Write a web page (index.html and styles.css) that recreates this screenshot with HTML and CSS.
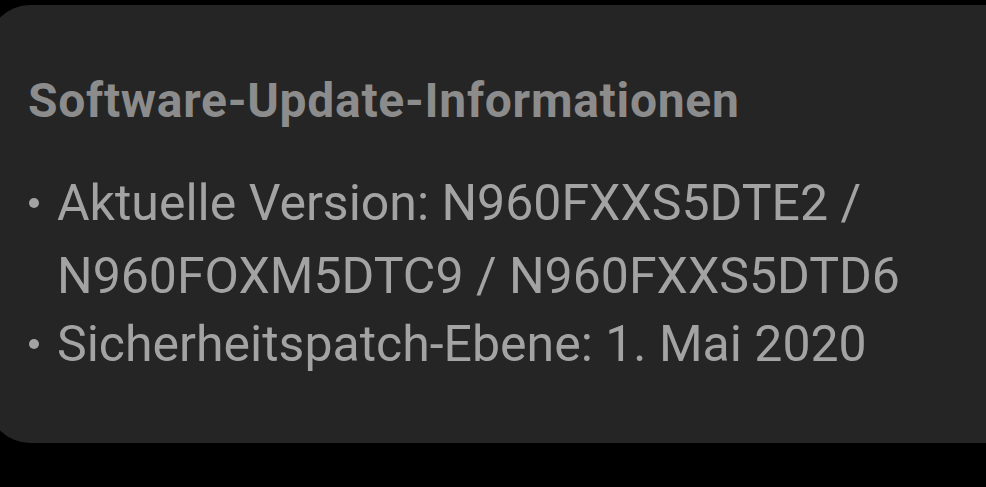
FILE: index.html
```html
<!DOCTYPE html>
<html lang="de">
<head>
  <meta charset="UTF-8" />
  <meta name="viewport" content="width=device-width, initial-scale=1.0" />
  <title>Software-Update-Informationen</title>
  <link rel="stylesheet" href="styles.css">
</head>
<body>
  <div class="card">
    <h2 class="card-title">Software-Update-Informationen</h2>
    <ul class="info-list">
      <li>Aktuelle Version: N960FXXS5DTE2 / N960FOXM5DTC9 / N960FXXS5DTD6</li>
      <li>Sicherheitspatch-Ebene: 1. Mai 2020</li>
    </ul>
  </div>
</body>
</html>
```

FILE: styles.css
```css
html, body {
  margin: 0;
  height: 100%;
  background-color: #000000;
  overflow: hidden;
}
body {
  font-family: Roboto, 'Liberation Sans', sans-serif;
  padding-top: 5px;
}
.card {
  background-color: #252525;
  margin-left: -12px;
  width: 1040px;
  height: 438px;
  border-radius: 42px;
  box-sizing: border-box;
  padding: 68px 0 0 40px;
}
.card-title {
  margin: 0;
  color: #8c8c8c;
  font-size: 48px;
  font-weight: bold;
  letter-spacing: 0.7px;
  line-height: 56px;
}
.info-list {
  list-style: none;
  margin: 38px 0 0;
  padding: 0;
  width: 900px;
  color: #a3a3a3;
  font-size: 50px;
  line-height: 73px;
}
.info-list li {
  position: relative;
  padding-left: 29px;
}
.info-list li + li {
  margin-top: -5px;
}
.info-list li::before {
  content: '';
  position: absolute;
  left: 1px;
  top: 31px;
  width: 10px;
  height: 10px;
  border-radius: 50%;
  background-color: #a3a3a3;
}
```
